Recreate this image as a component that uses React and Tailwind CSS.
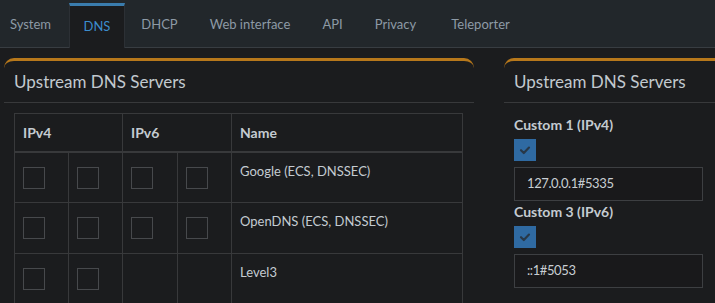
import React from "react";

const tabs = [
  { label: "System", w: "w-[73px]" },
  { label: "DNS", w: "w-[56px]", active: true },
  { label: "DHCP", w: "w-[65px]" },
  { label: "Web interface", w: "w-[112px]" },
  { label: "API", w: "w-[49px]" },
  { label: "Privacy", w: "w-[73px]" },
  { label: "Teleporter", w: "w-[93px]" },
];

function Box() {
  return <div className="w-[22px] h-[22px] border border-[#47494c]" />;
}

function Checked() {
  return (
    <div className="w-[22px] h-[22px] bg-[#2f6aa2] flex items-center justify-center">
      <svg width="14" height="14" viewBox="0 0 14 14">
        <path d="M3 7.2 L5.8 10 L11 4.6" fill="none" stroke="#283848" strokeWidth="2.2" strokeLinecap="round" strokeLinejoin="round" />
      </svg>
    </div>
  );
}

const rows = [
  { name: "Google (ECS, DNSSEC)", v6: true },
  { name: "OpenDNS (ECS, DNSSEC)", v6: true },
  { name: "Level3", v6: false },
];

export default function App() {
  return (
    <div className="w-[715px] h-[303px] overflow-hidden bg-[#1b1c1e] text-[#c4cbd1]" style={{ fontFamily: "Lato, 'Noto Sans', sans-serif" }}>
      <div className="h-[48px] bg-[#22272b] border-b border-[#383d42] flex items-end gap-[2px] -ml-[6px]">
        {tabs.map((t) => (
          <div
            key={t.label}
            className={
              "h-[44px] flex items-center justify-center text-[13px] shrink-0 " +
              t.w +
              (t.active
                ? " bg-[#1b1c1e] border-t-[3px] border-[#3a7cad] text-[#3c8dcc] -mb-px h-[45px] border-x border-x-[#2c3035]"
                : " text-[#8d9aa6]")
            }
          >
            {t.label}
          </div>
        ))}
      </div>
      <div className="flex gap-[30px] pl-[4px] pt-[10px]">
        <div className="w-[470px] shrink-0 rounded-t-[10px] border-t-[3px] border-[#b7781b]">
          <div className="h-[42px] flex items-center pl-[10px] border-b border-[#38393b] text-[17px] text-[#c2c9cf]">
            Upstream DNS Servers
          </div>
          <div className="pt-[10px] pl-[10px]">
            <table className="border-collapse w-[449px] text-[13px]">
              <thead>
                <tr className="h-[38px]">
                  <th colSpan={2} className="border border-[#38393b] border-b-2 text-left font-bold text-[14px] pl-[8px] w-[108px]">IPv4</th>
                  <th colSpan={2} className="border border-[#38393b] border-b-2 text-left font-bold text-[14px] pl-[8px] w-[109px]">IPv6</th>
                  <th className="border border-[#38393b] border-b-2 text-left font-bold text-[14px] pl-[8px]">Name</th>
                </tr>
              </thead>
              <tbody>
                {rows.map((r) => (
                  <tr key={r.name} className="h-[51px]">
                    <td className="border border-[#38393b] align-top pt-[14px] pl-[8px] w-[54px]"><Box /></td>
                    <td className="border border-[#38393b] align-top pt-[14px] pl-[8px] w-[54px]"><Box /></td>
                    <td className="border border-[#38393b] align-top pt-[14px] pl-[8px] w-[55px]">{r.v6 && <Box />}</td>
                    <td className="border border-[#38393b] align-top pt-[14px] pl-[8px] w-[54px]">{r.v6 && <Box />}</td>
                    <td className="border border-[#38393b] align-top pt-[8px] pl-[8px] leading-[20px]">{r.name}</td>
                  </tr>
                ))}
              </tbody>
            </table>
          </div>
        </div>
        <div className="w-[470px] shrink-0 rounded-t-[10px] border-t-[3px] border-[#b7781b]">
          <div className="h-[42px] flex items-center pl-[10px] border-b border-[#38393b] text-[17px] text-[#c2c9cf]">
            Upstream DNS Servers
          </div>
          <div className="pl-[10px] pt-[14px] flex flex-col text-[14px]">
            <div className="font-bold leading-[16px] h-[16px]">Custom 1 (IPv4)</div>
            <div className="mt-[6px]"><Checked /></div>
            <div className="mt-[6px] w-[189px] h-[34px] border border-[#3d3f42] bg-[#19191b] flex items-center pl-[12px] text-[13px] tracking-[-0.4px] text-[#c8ced3]">127.0.0.1#5335</div>
            <div className="mt-[3px] font-bold leading-[16px] h-[16px]">Custom 3 (IPv6)</div>
            <div className="mt-[6px]"><Checked /></div>
            <div className="mt-[6px] w-[189px] h-[34px] border border-[#3d3f42] bg-[#19191b] flex items-center pl-[12px] text-[13px] tracking-[-0.4px] text-[#c8ced3]">::1#5053</div>
          </div>
        </div>
      </div>
    </div>
  );
}
